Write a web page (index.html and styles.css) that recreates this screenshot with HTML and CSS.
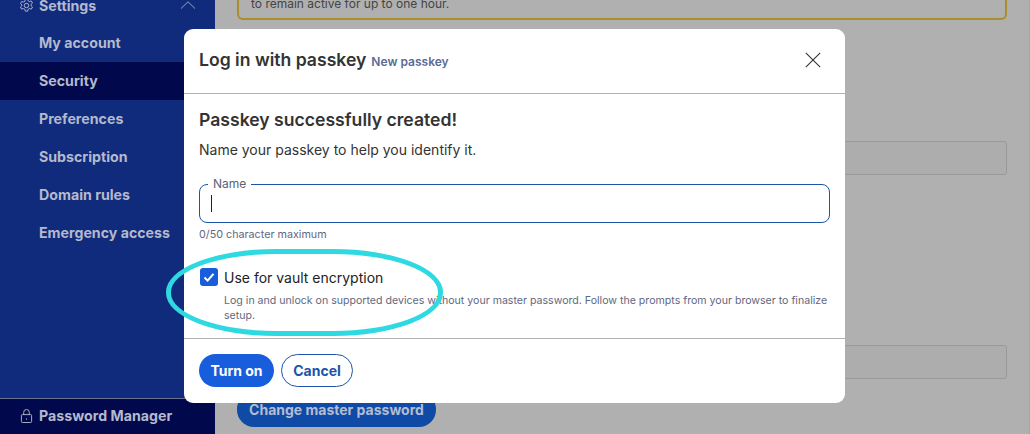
FILE: index.html
```html
<!DOCTYPE html>
<html lang="en">
<head>
  <meta charset="UTF-8">
  <title>Security - Password Manager</title>
  <link rel="stylesheet" href="styles.css">
</head>
<body>
  <div class="app">
    <!-- Sidebar -->
    <aside class="sidebar">
      <div class="nav-head">
        <svg class="nav-icon" viewBox="0 0 16 16" width="15" height="15" fill="none" stroke="#b4b9cc" stroke-width="1">
          <path d="M6.7 1h2.6l.4 2 1.5.8 1.9-.7 1.3 2.3-1.5 1.3v1.6l1.5 1.3-1.3 2.3-1.9-.7-1.5.8-.4 2H6.7l-.4-2-1.5-.8-1.9.7-1.3-2.3 1.5-1.3V7.3L1.6 6l1.3-2.3 1.9.7 1.5-.8z"/>
          <circle cx="8" cy="8" r="2.4"/>
        </svg>
        <span class="nav-head-label">Settings</span>
        <svg class="chevron" viewBox="0 0 16 8" width="16" height="8" fill="none" stroke="#98a2c4" stroke-width="1">
          <path d="M1 7.5 8 .8l7 6.7"/>
        </svg>
      </div>
      <nav class="nav-list">
        <a class="nav-item">My account</a>
        <a class="nav-item active">Security</a>
        <a class="nav-item">Preferences</a>
        <a class="nav-item">Subscription</a>
        <a class="nav-item">Domain rules</a>
        <a class="nav-item">Emergency access</a>
      </nav>
      <div class="product">
        <svg class="nav-icon" viewBox="0 0 14 16" width="13" height="16" fill="none" stroke="#b4b9cc" stroke-width="1">
          <rect x="1.5" y="6.5" width="11" height="8.5" rx="1"/>
          <path d="M4 6.5V4a3 3 0 0 1 6 0v2.5"/>
          <path d="M7 10.5v1.5"/>
        </svg>
        <span>Password Manager</span>
      </div>
    </aside>

    <!-- Page behind the dialog -->
    <main class="content">
      <div class="notice">to remain active for up to one hour.</div>
      <div class="field field-first"></div>
      <div class="field field-second"></div>
      <button class="btn-dimmed">Change master password</button>
    </main>
  </div>

  <!-- Dialog -->
  <section class="dialog">
    <header class="dialog-header">
      <h1 class="dialog-title">Log in with passkey</h1>
      <span class="dialog-subtitle">New passkey</span>
      <svg class="close" viewBox="0 0 16 16" width="16" height="16" fill="none" stroke="#333" stroke-width="1.1">
        <path d="M.8.8l14.4 14.4M15.2.8.8 15.2"/>
      </svg>
    </header>
    <div class="dialog-body">
      <h2 class="success">Passkey successfully created!</h2>
      <p class="lead">Name your passkey to help you identify it.</p>
      <div class="name-field">
        <span class="name-label">Name</span>
        <span class="caret"></span>
      </div>
      <p class="hint">0/50 character maximum</p>
      <div class="check-row">
        <span class="checkbox">
          <svg viewBox="0 0 12 12" width="12" height="12" fill="none" stroke="#fff" stroke-width="2">
            <path d="M1.5 6.5 4.6 9.6 10.5 2.8"/>
          </svg>
        </span>
        <span class="check-label">Use for vault encryption</span>
      </div>
      <p class="check-help">Log in and unlock on supported devices without your master password. Follow the prompts from your browser to finalize setup.</p>
    </div>
    <footer class="dialog-footer">
      <button class="btn btn-primary">Turn on</button>
      <button class="btn btn-outline">Cancel</button>
    </footer>
  </section>

  <!-- Highlight drawn over the screenshot -->
  <div class="highlight"></div>
</body>
</html>
```

FILE: styles.css
```css
* {
  box-sizing: border-box;
}

html, body {
  height: 100%;
}

body {
  margin: 0;
  overflow: hidden;
  font-family: Inter, "Open Sans", sans-serif;
  background-color: #b0b0b0;
  color: #333;
}

.app {
  display: flex;
  height: 434px;
}

.sidebar {
  width: 215px;
  flex-shrink: 0;
  display: flex;
  flex-direction: column;
  background-color: #102a7c;
  color: #b4b9cc;
  font-size: 14.2px;
  font-weight: 700;
}

.nav-head {
  height: 24px;
  margin-top: -7px;
  padding: 0 19px 0 19px;
  display: flex;
  align-items: center;
  flex-shrink: 0;
}

.nav-icon {
  flex-shrink: 0;
}

.nav-head-label {
  margin-left: 5px;
  flex: 1;
}

.nav-list {
  margin-top: 7px;
  flex: 1;
}

.nav-item {
  display: block;
  height: 38px;
  line-height: 38px;
  padding-left: 39px;
}

.nav-item.active {
  background-color: #02084c;
}

.product {
  height: 36px;
  padding-bottom: 2px;
  border-top: 1px solid #6a7294;
  background-color: #02084c;
  padding-left: 20px;
  display: flex;
  align-items: center;
  gap: 6px;
}

.content {
  flex: 1;
  position: relative;
  padding: 0 22px;
  border-right: 1px solid #a4a4a4;
}

.notice {
  margin-top: -16px;
  height: 36px;
  padding: 13px 12px 0 12px;
  border: 2px solid #a98e2b;
  border-top: 0;
  border-radius: 0 0 6px 6px;
  font-size: 12px;
  line-height: 14px;
  color: #444;
}

.field {
  height: 34px;
  border: 1px solid #999;
  border-radius: 3px;
  background-color: #adadad;
}

.field-first {
  margin-top: 121px;
}

.field-second {
  margin-top: 170px;
}

.btn-dimmed {
  display: block;
  margin-top: 13px;
  width: 199px;
  height: 35px;
  padding: 0;
  border: none;
  border-radius: 17px;
  background-color: #0f4aa6;
  color: #b3bdd2;
  font-family: inherit;
  font-size: 14px;
  font-weight: 700;
}

/* dialog */

.dialog {
  position: absolute;
  left: 184px;
  top: 29px;
  width: 661px;
  height: 374px;
  background-color: #fff;
  border-radius: 9px;
  display: flex;
  flex-direction: column;
}

.dialog-header {
  height: 65px;
  padding: 0 24px 2px 15px;
  border-bottom: 1px solid #b1b1b8;
  display: flex;
  align-items: center;
  flex-shrink: 0;
}

.dialog-title {
  margin: 0 0 2px 0;
  font-size: 17.6px;
  font-weight: 600;
  color: #333;
}

.dialog-subtitle {
  margin-left: 5px;
  margin-top: 3px;
  font-size: 12px;
  font-weight: 600;
  color: #5a6b97;
  flex: 1;
}

.dialog-body {
  flex: 1;
  padding: 15px 15px 0 15px;
}

.success {
  margin: 0;
  font-size: 17.6px;
  line-height: 22px;
  font-weight: 600;
  color: #333;
}

.lead {
  margin: 9px 0 0 0;
  font-size: 14px;
  line-height: 20px;
  color: #333;
}

.name-field {
  position: relative;
  height: 39px;
  margin-top: 24px;
  border: 1px solid #1c55a8;
  border-radius: 8px;
  display: flex;
  align-items: center;
  padding-left: 11px;
}

.name-label {
  position: absolute;
  left: 8px;
  top: -8px;
  padding: 0 5px;
  background-color: #fff;
  font-size: 12px;
  line-height: 14px;
  color: #5a6478;
}

.caret {
  width: 1px;
  height: 17px;
  background-color: #222;
}

.hint {
  margin: 5px 0 0 0;
  font-size: 10.75px;
  line-height: 14px;
  color: #5f6880;
}

.check-row {
  margin-top: 25px;
  display: flex;
  align-items: center;
  gap: 6px;
  height: 20px;
  padding-left: 1px;
}

.checkbox {
  width: 18px;
  height: 18px;
  border-radius: 3px;
  background-color: #175ddc;
  display: flex;
  align-items: center;
  justify-content: center;
}

.check-label {
  font-size: 14px;
  color: #222;
}

.check-help {
  margin: 6px 0 0 25px;
  font-size: 10.6px;
  line-height: 15px;
  color: #5f6880;
}

.dialog-footer {
  height: 65px;
  padding: 15px 15px 0 15px;
  border-top: 1px solid #b1b1b8;
  display: flex;
  align-items: flex-start;
  gap: 7px;
  flex-shrink: 0;
}

.btn {
  height: 33px;
  padding: 0;
  border-radius: 17px;
  font-family: inherit;
  font-size: 14px;
  font-weight: 700;
}

.btn-primary {
  width: 75px;
  border: none;
  background-color: #175ddc;
  color: #fff;
}

.btn-outline {
  width: 72px;
  border: 1px solid #1c55a8;
  background-color: #fff;
  color: #1c55a8;
}

.highlight {
  position: absolute;
  left: 166px;
  top: 249px;
  width: 277px;
  height: 87px;
  border: 5px solid #2fd9e2;
  border-radius: 110px / 43px;
}
```
